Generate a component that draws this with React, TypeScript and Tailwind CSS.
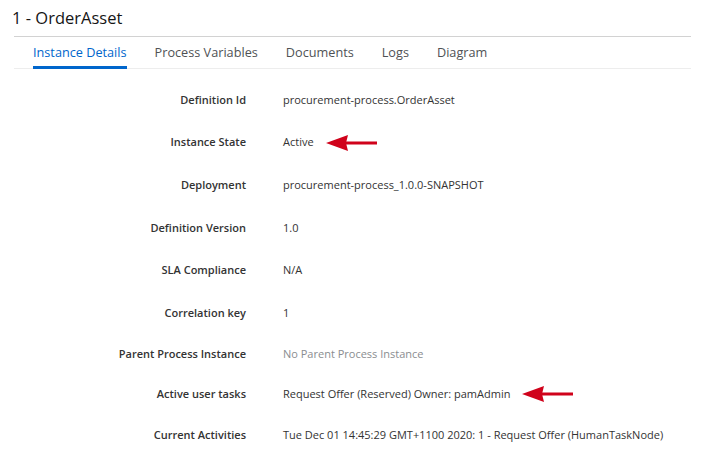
import React from "react";

const rows: { label: string; value: string; h: string; muted?: boolean; arrow?: boolean }[] = [
  { label: "Definition Id", value: "procurement-process.OrderAsset", h: "h-[42px]" },
  { label: "Instance State", value: "Active", h: "h-[43px]", arrow: true },
  { label: "Deployment", value: "procurement-process_1.0.0-SNAPSHOT", h: "h-[43px]" },
  { label: "Definition Version", value: "1.0", h: "h-[42px]" },
  { label: "SLA Compliance", value: "N/A", h: "h-[43px]" },
  { label: "Correlation key", value: "1", h: "h-[42px]" },
  { label: "Parent Process Instance", value: "No Parent Process Instance", h: "h-[40px]", muted: true },
  { label: "Active user tasks", value: "Request Offer (Reserved) Owner: pamAdmin", h: "h-[40px]", arrow: true },
  { label: "Current Activities", value: "Tue Dec 01 14:45:29 GMT+1100 2020: 1 - Request Offer (HumanTaskNode)", h: "h-[43px]" },
];

const tabs = ["Instance Details", "Process Variables", "Documents", "Logs", "Diagram"];

function Arrow() {
  return (
    <svg width="52" height="18" viewBox="0 0 52 18" className="ml-[12px] shrink-0">
      <rect x="18" y="7.5" width="33" height="3" fill="#d0021b" />
      <polygon points="0,9 22,1 20,9 22,17" fill="#d0021b" />
    </svg>
  );
}

export default function App() {
  return (
    <div className="w-[714px] h-[476px] bg-white overflow-hidden" style={{ fontFamily: '"Open Sans", "Noto Sans", sans-serif' }}>
      <div className="h-[36px] flex items-center pl-[12px] text-[16.5px] text-[#151515]">1 - OrderAsset</div>
      <div className="ml-[14px] w-[677px] border-t border-[#d2d2d2]">
        <div className="flex gap-[28px] pl-[19px] h-[32px] border-b border-[#ededed] text-[12.7px]">
          {tabs.map((t, i) => (
            <div
              key={t}
              className={
                i === 0
                  ? "flex items-center text-[#0066cc] border-b-[3px] border-[#0066cc] pt-[3px] -mb-[1px]"
                  : "flex items-center text-[#4f5255] pt-[3px] -mb-[1px] border-b-[3px] border-transparent"
              }
            >
              {t}
            </div>
          ))}
        </div>
      </div>
      <div className="pt-[10px]">
        {rows.map((r) => (
          <div key={r.label} className={`flex items-center ${r.h}`}>
            <div className="w-[246px] text-right text-[11px] font-semibold text-[#333333]">{r.label}</div>
            <div className={`ml-[37px] flex items-center text-[11px] ${r.muted ? "text-[#8a8d90]" : "text-[#333333]"}`}>
              {r.value}
              {r.arrow && <Arrow />}
            </div>
          </div>
        ))}
      </div>
    </div>
  );
}
